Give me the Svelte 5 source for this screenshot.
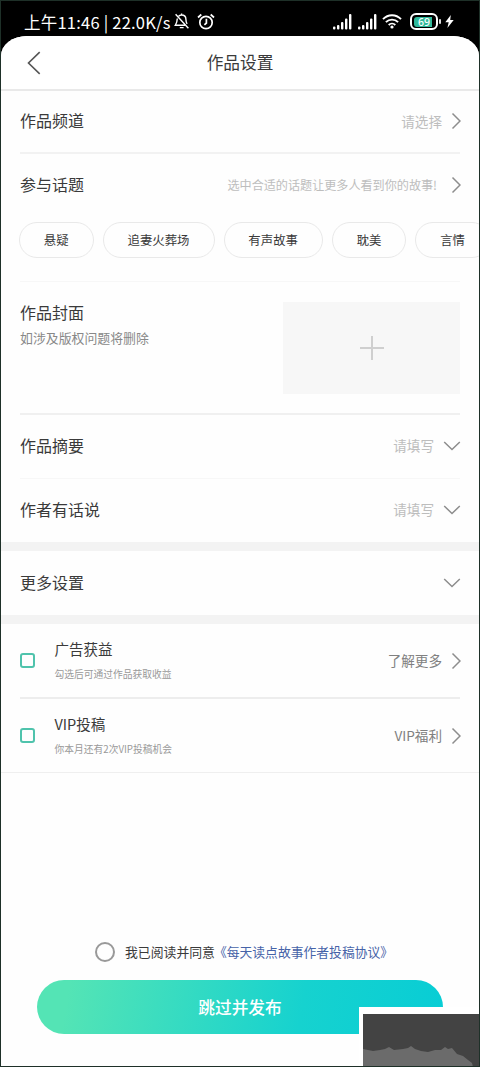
<script>
  const tags = [
    { label: '悬疑', width: 74.5 },
    { label: '追妻火葬场', width: 112 },
    { label: '有声故事', width: 99.3 },
    { label: '耽美', width: 74.5 },
    { label: '言情', width: 74.5 }
  ];
  const perks = [
    { title: '广告获益', note: '勾选后可通过作品获取收益', link: '了解更多' },
    { title: 'VIP投稿', note: '你本月还有2次VIP投稿机会', link: 'VIP福利' }
  ];
</script>

{#snippet right()}
  <svg class="chev-r" width="10" height="18" viewBox="0 0 10 18"><path d="M1.5 1.5 9 9 1.5 16.5" /></svg>
{/snippet}
{#snippet down()}
  <svg class="chev-d" width="18" height="10" viewBox="0 0 18 10"><path d="M1.2 1 9 8.5 16.8 1" /></svg>
{/snippet}
{#snippet signal()}
  <svg width="19" height="17" viewBox="0 0 19 17" fill="#fff">
    <rect x="0" y="13.5" width="2.4" height="3" rx="1" />
    <rect x="4" y="12" width="2.4" height="4.5" rx="1" />
    <rect x="8" y="9" width="2.4" height="7.5" rx="1" />
    <rect x="12" y="5.5" width="2.4" height="11" rx="1" />
    <rect x="16" y="1" width="2.4" height="15.5" rx="1" />
  </svg>
{/snippet}

<div class="screen">
  <div class="status">
    <span class="clock">上午11:46 | 22.0K/s</span>
    <svg class="bell" width="16" height="17" viewBox="0 0 16 17" fill="none" stroke="#fff" stroke-width="1.4">
      <path d="M4.6 3.3C5.3 2.4 6.3 2 7.6 2c2.8 0 4.3 1.8 4.3 4.3 0 2 .4 3.3 1.2 4.5M3.3 5.6C3.2 8.4 3 10 1.3 12.3H11M5.8 14.6h3.8M7.6 .6V2M1.6 1.3 14.4 15.3" />
    </svg>
    <svg class="alarm" width="18" height="18" viewBox="0 0 18 18" fill="none" stroke="#fff" stroke-width="1.7">
      <circle cx="9" cy="9.5" r="6.2" /><path d="M9.4 5.8V10L7.4 11.8M1 4.5 4.3 1.5M13.7 1.5 17 4.5" />
    </svg>
    <div class="indicators">
      {@render signal()}
      {@render signal()}
      <svg class="wifi" width="20" height="15" viewBox="0 0 20 15" fill="none" stroke="#fff" stroke-width="1.9">
        <path d="M1 5.2C6-.1 14-.1 19 5.2M3.9 8.2c3.4-3.5 8.8-3.5 12.2 0M6.7 11c1.9-1.9 4.7-1.9 6.6 0" />
        <circle cx="10" cy="13" r="1.6" fill="#fff" stroke="none" />
      </svg>
      <div class="battery"><span>69</span></div>
      <svg class="bolt" width="9" height="13" viewBox="0 0 9 13"><path d="M5.8 0 .3 7.2h3.4L2.4 13 8.7 5.1H5.2z" fill="#fff" /></svg>
    </div>
  </div>

  <div class="sheet">
    <header>
      <svg width="14" height="24" viewBox="0 0 14 24"><path d="M12.7 1.2 1.5 12l11.2 10.8" fill="none" stroke="#555" stroke-width="1.6" /></svg>
      <h1>作品设置</h1>
    </header>

    <div class="row channel"><b>作品频道</b><span class="hint">请选择</span>{@render right()}</div>

    <section class="topics">
      <div class="row"><b>参与话题</b><span class="hint small">选中合适的话题让更多人看到你的故事!</span>{@render right()}</div>
      <div class="tags">
        {#each tags as tag}
          <span class="tag" style="width: {tag.width}px">{tag.label}</span>
        {/each}
      </div>
    </section>

    <section class="cover">
      <div><b>作品封面</b><p>如涉及版权问题将删除</p></div>
      <div class="upload">
        <svg width="26" height="26" viewBox="0 0 26 26"><path d="M13 1v24M1 13h24" stroke="#cfcfcf" stroke-width="2" /></svg>
      </div>
    </section>

    <div class="row summary"><b>作品摘要</b><span class="hint">请填写</span>{@render down()}</div>
    <div class="row author"><b>作者有话说</b><span class="hint">请填写</span>{@render down()}</div>
    <div class="row more"><b>更多设置</b><span class="hint"></span>{@render down()}</div>

    <section class="perks">
      {#each perks as perk}
        <div class="perk">
          <i class="check"></i>
          <div class="copy"><strong>{perk.title}</strong><small>{perk.note}</small></div>
          <span class="link">{perk.link}</span>
          {@render right()}
        </div>
      {/each}
    </section>

    <footer>
      <div class="agree"><i class="radio"></i><span>我已阅读并同意<em>《每天读点故事作者投稿协议》</em></span></div>
      <button>跳过并发布</button>
    </footer>
  </div>

  <div class="corner">
    <svg width="117" height="53" viewBox="0 0 117 53">
      <rect width="117" height="53" fill="#434343" />
      <path d="M0 35 5 36 10 37 17 36 22 35 26 33 31 36 40 35 45 34 48 32 52 35 58 37 65 38 72 36 78 36 82 33 85 35 89 34 94 40 100 42 105 46 109 49 110 53H0z" fill="#6b6b6b" />
    </svg>
  </div>
</div>

<style>
  :global(body) { background: #fff; }
  .screen, .screen * { box-sizing: border-box; }
  .screen {
    position: relative;
    width: 480px;
    height: 1067px;
    border: 1px solid #1e3028;
    background: #000;
    overflow: hidden;
    font-family: "Noto Sans CJK SC", sans-serif;
    color: #3a3a3a;
    display: flex;
    flex-direction: column;
  }
  svg { display: block; flex: none; }
  .status { height: 35px; flex: none; display: flex; align-items: center; padding: 6px 25px 0 23px; color: #fff; }
  .clock { width: 148px; font-size: 16.5px; line-height: 24px; letter-spacing: .22px; white-space: nowrap; font-weight: 400; }
  .bell { margin-left: 2px; }
  .alarm { margin-left: 7px; }
  .indicators { margin-left: auto; display: flex; align-items: center; gap: 6px; }
  .wifi { margin-left: -1px; }
  .battery {
    position: relative; width: 28px; height: 17px; margin: 0 1px 0 2px; padding: 1.5px;
    border: 2px solid #fff; border-radius: 6px; display: flex;
  }
  .battery::after { content: ""; position: absolute; right: -5px; top: 4px; width: 2px; height: 5px; background: #ddd; border-radius: 1px; }
  .battery span {
    flex: 1; border-radius: 3px; text-align: center; font: 500 10.5px/10px "Noto Sans", sans-serif; color: #fff;
    background: linear-gradient(90deg, #30b99a 84%, #000 84%);
  }
  .sheet { flex: 1; display: flex; flex-direction: column; min-height: 0; background: #fefefe; border-radius: 26px 26px 0 0 / 20px 20px 0 0; }
  header { height: 55px; flex: none; display: flex; align-items: center; padding: 0 26px; border-bottom: 2px solid #e9e9e9; background: #fff; border-radius: 26px 26px 0 0 / 20px 20px 0 0; }
  h1 { flex: 1; margin: -2px 14px 0 0; text-align: center; font-size: 16.7px; line-height: 24px; font-weight: 400; }
  b { font-size: 16px; line-height: 24px; font-weight: 400; display: block; }
  .row { display: flex; align-items: center; flex: none; margin: 0 19px; }
  .row b { margin-top: -2px; }
  .hint { margin-left: auto; margin-top: -1px; font-size: 13.6px; line-height: 20px; color: #bdbdbd; }
  .small { font-size: 12.1px; margin-top: 0; }
  .chev-r, .chev-d { fill: none; stroke: #8d8d8d; stroke-width: 1.5; margin: 0 -1px 0 9px; }
  .small + .chev-r { margin-left: 14px; }
  .channel { height: 63px; padding-bottom: 1px; border-bottom: 2px solid #f2f2f2; }
  .topics { height: 127px; flex: none; padding-left: 18px; overflow: hidden; }
  .topics .row { height: 61px; margin: 0 19px 0 1px; }
  .tags { display: flex; gap: 9px; margin-top: 7px; }
  .tag { flex: none; height: 36px; border: 1px solid #e9e9e9; border-radius: 18px; text-align: center; font-size: 12.4px; line-height: 34px; }
  .cover { height: 134px; flex: none; margin: 0 19px; padding: 20px 0 0; border-top: 1px solid #f7f7f7; border-bottom: 2px solid #f0f0f0; display: flex; justify-content: space-between; }
  .cover b { margin-top: -2px; }
  p { margin: 4px 0 0; font-size: 12.9px; line-height: 20px; color: #888; }
  .upload { width: 177px; height: 92px; background: #f7f7f7; display: flex; align-items: center; justify-content: center; }
  .summary { height: 64px; padding-bottom: 2px; border-bottom: 1px solid #f7f7f7; }
  .author { height: 63px; padding-bottom: 2px; }
  .more { height: 82px; margin: 0; padding: 0 19px; border: solid #f3f3f3; border-width: 9px 0; }
  .perks { flex: none; border-bottom: 1px solid #efefef; }
  .perk { height: 73px; margin: 0 19px; display: flex; align-items: center; }
  .perk + .perk { height: 75px; border-top: 2px solid #ededed; }
  .check { width: 15px; height: 15px; border: 2px solid #4fc3ac; border-radius: 3px; }
  .copy { margin-left: 19.5px; }
  strong { display: block; font-size: 14.5px; line-height: 24px; font-weight: 400; }
  small { display: block; margin-top: 3px; font-size: 9.75px; line-height: 20px; color: #999; }
  .link { margin-left: auto; margin-top: -1px; font-size: 13.6px; line-height: 20px; color: #808080; }
  footer { margin-top: auto; padding: 0 36px 32px; }
  .agree { display: flex; align-items: center; padding-left: 58px; height: 20px; white-space: nowrap; font-size: 12.85px; line-height: 20px; }
  .radio { width: 20px; height: 20px; border: 2px solid #999; border-radius: 50%; margin-right: 10px; }
  em { font-style: normal; color: #4663a8; font-size: 12.8px; margin-left: -1px; }
  button {
    display: block; width: 406px; height: 54px; margin-top: 18px; padding: 0; border: 0; border-radius: 27px;
    background: linear-gradient(100deg, #54e4b5 8%, #16d2cf 65%, #08cdd5);
    color: #fff; font: 500 16.7px/24px "Noto Sans CJK SC", sans-serif;
  }
  .corner { position: absolute; right: -1px; bottom: -1px; width: 121px; height: 60px; background: #fff; padding: 7px 0 0 4px; }
</style>
